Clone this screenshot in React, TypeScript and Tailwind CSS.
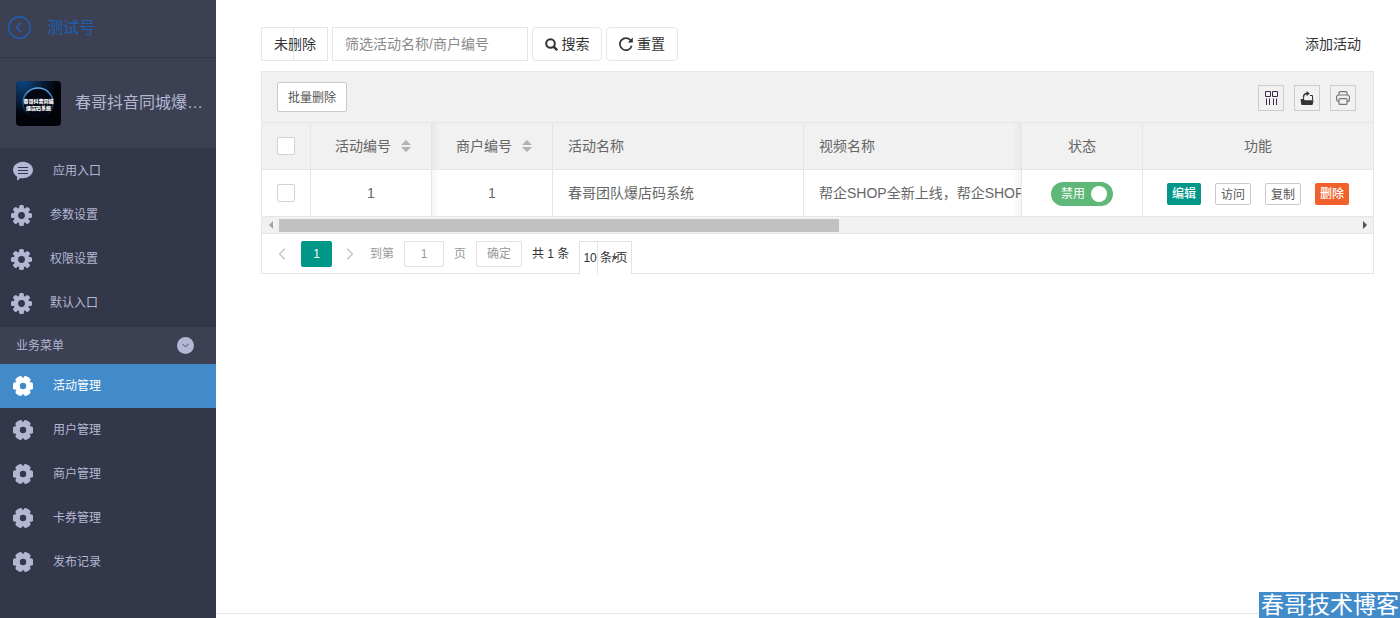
import clsx from "clsx";
import { ChevronDown, ChevronLeft, ChevronRight } from "lucide-react";
import { useState } from "react";

const systemMenu = [
  { label: "应用入口", icon: "chat" },
  { label: "参数设置", icon: "cog" },
  { label: "权限设置", icon: "cog" },
  { label: "默认入口", icon: "cog" },
];

const businessMenu = ["活动管理", "用户管理", "商户管理", "卡券管理", "发布记录"];

function ChatIcon() {
  return (
    <svg width="20" height="20" viewBox="0 0 20 20" fill="currentColor">
      <path d="M10 .8c5.5 0 10 3.6 10 8.2s-4.500 8.200-10 8.200c-.9 0-1.800-.1-2.600-.3L4 19.800l.2-4.100C1.600 14.200 0 11.800 0 9 0 4.400 4.500.8 10 .8z" />
      <path d="M5 6.500h10M5 9.500h10M5 12.500h10" stroke="#33374a" strokeWidth="1" />
    </svg>
  );
}

function CogIcon() {
  return (
    <svg width="21" height="21" viewBox="0 0 21 21">
      <g fill="currentColor">
        {[0, 45, 90, 135].map((angle) => (
          <rect key={angle} x="8.100" y="0" width="4.800" height="21" rx="1.500" transform={`rotate(${angle} 10.5 10.5)`} />
        ))}
        <circle cx="10.500" cy="10.500" r="7.800" />
      </g>
      <circle cx="10.500" cy="10.500" r="3.400" fill="#33374a" />
    </svg>
  );
}

function GearIcon({ active }: { active: boolean }) {
  return (
    <svg width="20" height="20" viewBox="0 0 20 20">
      <g fill="currentColor">
        {[30, 90, 150].map((angle) => (
          <rect key={angle} x="6.200" y="-0.200" width="7.600" height="20.400" rx="2.600" transform={`rotate(${angle} 10 10)`} />
        ))}
        <circle cx="10" cy="10" r="7.700" />
      </g>
      <circle cx="10" cy="10" r="3.200" fill={active ? "#428bca" : "#33374a"} />
    </svg>
  );
}

function Avatar() {
  return (
    <svg className="shrink-0 rounded" width="45" height="45" viewBox="0 0 45 45">
      <defs>
        <radialGradient id="glow" cx="0.15" cy="0" r="0.75">
          <stop offset="0" stopColor="#0d4680" />
          <stop offset="1" stopColor="#010309" />
        </radialGradient>
        <linearGradient id="ring" x1="0" y1="0" x2="0" y2="1">
          <stop offset="0" stopColor="#5fa8e8" />
          <stop offset="0.500" stopColor="#1b5590" />
          <stop offset="0.900" stopColor="#020811" />
        </linearGradient>
      </defs>
      <rect width="45" height="45" fill="url(#glow)" />
      <circle cx="22" cy="22" r="15" fill="#020712" stroke="url(#ring)" strokeWidth="1.500" />
      <g fill="#fff" fontSize="5" fontWeight="900" textAnchor="middle">
        <text x="22.500" y="22">春哥抖音同城</text>
        <text x="22.500" y="29">爆店码系统</text>
      </g>
    </svg>
  );
}

function Sidebar() {
  const [current, setCurrent] = useState("活动管理");
  const [open, setOpen] = useState(true);

  return (
    <aside className="w-[216px] shrink-0 bg-[#33374a] text-xs text-[#b3b7d3]">
      <a href="#" className="flex h-[58px] items-center gap-4 border-b border-[#343849] bg-[#3c4052] pb-0.5 pl-2 text-base text-[#1c60b4]">
        <svg width="23" height="23" viewBox="0 0 23 23" fill="none" stroke="currentColor" strokeWidth="1.500">
          <circle cx="11.500" cy="11.500" r="10.700" />
          <path d="M13 7l-4.500 4.500L13 16" />
        </svg>
        测试号
      </a>
      <div className="flex h-[90px] items-center gap-3.5 bg-[#3c4052] pl-4 text-base">
        <Avatar />
        <span className="w-[130px] shrink-0 truncate">春哥抖音同城爆店码系统</span>
      </div>
      <nav className="pt-px pb-0.5">
        {systemMenu.map((item) => (
          <a
            key={item.label}
            href="#"
            className={clsx("flex h-11 items-center", item.icon === "chat" ? "gap-5 pl-[13px]" : "gap-[18px] pl-[11px]")}
          >
            {item.icon === "chat" ? <ChatIcon /> : <CogIcon />}
            {item.label}
          </a>
        ))}
      </nav>
      <button
        type="button"
        onClick={() => setOpen(!open)}
        className="flex h-[37px] w-full items-center justify-between bg-[#3c4052] pr-[22px] pl-4"
      >
        业务菜单
        <span className="flex size-[17px] items-center justify-center rounded-full bg-[#b3b7d3] text-[#3c4052]">
          <ChevronDown size={11} strokeWidth={2} />
        </span>
      </button>
      {open && (
        <nav>
          {businessMenu.map((label) => (
            <a
              key={label}
              href="#"
              onClick={() => setCurrent(label)}
              className={clsx("flex h-11 items-center gap-5 pl-[13px]", { "bg-[#428bca] text-white": label === current })}
            >
              <GearIcon active={label === current} />
              {label}
            </a>
          ))}
        </nav>
      )}
    </aside>
  );
}

function FilterBar() {
  return (
    <form className="flex items-center gap-1 text-sm text-[#333]" onSubmit={(e) => e.preventDefault()}>
      <div className="relative">
        <select aria-label="删除状态" className="h-[34px] w-[67px] appearance-none border border-[#e6e6e6] bg-white pl-3">
          <option>未删除</option>
          <option>已删除</option>
        </select>
        <span className="pointer-events-none absolute inset-y-0 left-8 w-px bg-[#e6e6e6]" />
      </div>
      <input
        type="text"
        aria-label="筛选活动名称/商户编号"
        placeholder="筛选活动名称/商户编号"
        className="h-[34px] w-[196px] border border-[#e6e6e6] px-3 placeholder:text-[#8a8a8a]"
      />
      <button type="submit" className="flex h-[34px] w-[70px] items-center justify-center gap-1 rounded border border-[#e6e6e6]">
        <svg width="13" height="13" viewBox="0 0 13 13" fill="none" stroke="currentColor" strokeWidth="2">
          <circle cx="5.500" cy="5.500" r="4.300" />
          <path d="M8.600 8.600l3.600 3.600" strokeWidth="2.400" />
        </svg>
        搜索
      </button>
      <button type="reset" className="flex h-[34px] w-[72px] items-center justify-center gap-1 rounded border border-[#e6e6e6]">
        <svg width="14" height="14" viewBox="0 0 14 14" fill="none" stroke="currentColor" strokeWidth="1.700">
          <path d="M11.800 3.600A6 6 0 1 0 12.700 8.800" />
          <path d="M13.800.4v5H8.800z" fill="currentColor" stroke="none" />
        </svg>
        重置
      </button>
      <a href="#" className="mr-[13px] ml-auto">
        添加活动
      </a>
    </form>
  );
}

function Toolbar() {
  const tool = "flex size-[26px] items-center justify-center border border-[#ccc]";

  return (
    <div className="flex h-[51px] items-center justify-between border-b border-[#e6e6e6] bg-[#f1f1f1] pr-[17px] pl-[15px]">
      <button type="button" className="h-[30px] w-[70px] rounded-xs border border-[#c9c9c9] bg-white pt-0.5 text-xs text-[#555]">
        批量删除
      </button>
      <div className="flex gap-2.5 pt-0.5">
        <button type="button" aria-label="筛选列" className={clsx(tool, "text-[#3a2c48]")}>
          <svg width="14" height="14" viewBox="0 0 14 14" fill="none" stroke="currentColor">
            <path d="M1.500.5h5v5h-5zM8.500.5h5v5h-5zM2.500 7.500V14M5.500 7.500V14M9.500 7.500V14M12.500 7.500V14" />
          </svg>
        </button>
        <button type="button" aria-label="导出" className={clsx(tool, "text-[#333]")}>
          <svg width="14" height="14" viewBox="0 0 14 14" fill="currentColor">
            <path d="M.6 8h3.200l1 1.200h8.800l-.8 4a.8.8 0 0 1-.8.7H2a.8.8 0 0 1-.8-.7z" />
            <path d="M10 4.500h2.500V9M3.500 8V6.500" fill="none" stroke="currentColor" />
            <path d="M3.500 6.500C3.500 4 5 2.500 7 2.500" fill="none" stroke="currentColor" strokeWidth="1.400" />
            <path d="M6.500 0l3.300 2.600L6.500 5.200z" />
          </svg>
        </button>
        <button type="button" aria-label="打印" className={clsx(tool, "text-[#777]")}>
          <svg width="14" height="14" viewBox="0 0 14 14" fill="none" stroke="currentColor" strokeWidth="1.200">
            <path d="M3 4V1.600Q3 .6 4 .6h6q1 0 1 1V4" />
            <path d="M3 10.500h-.4a2 2 0 0 1-2-2V6a2 2 0 0 1 2-2h8.800a2 2 0 0 1 2 2v2.500a2 2 0 0 1-2 2H11" />
            <rect x="3" y="7.600" width="8" height="5.800" rx="1" />
          </svg>
        </button>
      </div>
    </div>
  );
}

function SortArrows() {
  return (
    <svg width="10" height="12" viewBox="0 0 10 12" fill="#b2b2b2">
      <path d="M0 5l5-5 5 5zM0 7h10l-5 5z" />
    </svg>
  );
}

function ActivityTable() {
  const [enabled, setEnabled] = useState(true);
  const cell = "h-[47px] border-r border-b border-[#e6e6e6] font-normal";
  const box = "block mx-auto size-[18px] appearance-none rounded-xs border border-[#d2d2d2] bg-white checked:bg-[#5fb878]";
  const plain = "h-[22px] w-9 rounded-xs border border-[#c9c9c9] bg-white pt-0.5 text-[#555]";

  return (
    <table className="w-full table-fixed border-separate border-spacing-0 text-sm text-[#666]">
      <colgroup>
        <col className="w-[49px]" />
        <col className="w-[121px]" />
        <col className="w-[121px]" />
        <col className="w-[251px]" />
        <col />
        <col className="w-[121px]" />
        <col className="w-[230px]" />
      </colgroup>
      <thead className="bg-[#f1f1f1]">
        <tr>
          <th className={clsx(cell, "p-0")}>
            <input type="checkbox" aria-label="全选" className={box} />
          </th>
          {["活动编号", "商户编号"].map((title, i) => (
            <th key={title} className={clsx(cell, "py-0 pr-0 pl-1", { "bg-linear-to-r from-[#e8e8e8] to-[#f1f1f1] to-6%": i === 1 })}>
              <span className="flex items-center justify-center gap-2.5">
                {title}
                <SortArrows />
              </span>
            </th>
          ))}
          <th className={clsx(cell, "py-0 pr-0 pl-[15px] text-left")}>活动名称</th>
          <th className={clsx(cell, "bg-linear-to-l from-[#e8e8e8] to-[#f1f1f1] to-4% py-0 pr-0 pl-[15px] text-left")}>视频名称</th>
          <th className={clsx(cell, "p-0")}>状态</th>
          <th className={clsx(cell, "border-r-0 p-0")}>功能</th>
        </tr>
      </thead>
      <tbody>
        <tr>
          <td className={clsx(cell, "p-0")}>
            <input type="checkbox" aria-label="选择活动 1" className={box} />
          </td>
          <td className={clsx(cell, "p-0 text-center")}>1</td>
          <td className={clsx(cell, "bg-linear-to-r from-[#f5f5f5] to-white to-6% p-0 text-center")}>1</td>
          <td className={clsx(cell, "py-0 pr-0 pl-[15px]")}>春哥团队爆店码系统</td>
          <td className={clsx(cell, "bg-linear-to-l from-[#f5f5f5] to-white to-4% py-0 pr-0 pl-[15px]")}>
            <div className="overflow-hidden whitespace-nowrap">帮企SHOP全新上线，帮企SHOP</div>
          </td>
          <td className={clsx(cell, "px-0 pt-0.5 pb-0")}>
            <button
              type="button"
              role="switch"
              aria-checked={enabled}
              onClick={() => setEnabled(!enabled)}
              className={clsx(
                "mx-auto flex h-6 w-[62px] items-center justify-between rounded-full pr-[6px] pl-2.5 text-xs text-white",
                enabled ? "bg-[#5fb878]" : "bg-[#d2d2d2]",
              )}
            >
              禁用
              <span className="size-4 rounded-full bg-white" />
            </button>
          </td>
          <td className={clsx(cell, "border-r-0 px-0 pt-0.5 pb-0")}>
            <div className="flex items-center justify-center gap-3.5 text-xs">
              <button type="button" className="h-[22px] w-[34px] rounded-xs bg-[#009688] font-medium text-white">
                编辑
              </button>
              <button type="button" className={plain}>
                访问
              </button>
              <button type="button" className={plain}>
                复制
              </button>
              <button type="button" className="h-[22px] w-[34px] rounded-xs bg-[#f2602b] font-medium text-white">
                删除
              </button>
            </div>
          </td>
        </tr>
      </tbody>
    </table>
  );
}

function Scrollbar() {
  return (
    <div className="flex h-[17px] items-center border-b border-[#e6e6e6] bg-[#f1f1f1]">
      <span className="flex w-[17px] shrink-0 justify-center">
        <svg width="4" height="8" viewBox="0 0 4 8" fill="#a3a3a3">
          <path d="M4 0v8L0 4z" />
        </svg>
      </span>
      <div className="flex-1">
        <div className="h-[13px] w-[52%] bg-[#c1c1c1]" />
      </div>
      <span className="flex w-[17px] shrink-0 justify-center">
        <svg width="4" height="8" viewBox="0 0 4 8" fill="#505050">
          <path d="M0 0v8l4-4z" />
        </svg>
      </span>
    </div>
  );
}

function Pager() {
  return (
    <div className="flex h-[39px] items-start gap-2.5 pt-[7px] text-xs leading-[26px] text-[#999]">
      <div className="flex">
        <button type="button" aria-label="上一页" className="flex h-[26px] w-[39px] items-center justify-center text-[#c2c2c2]">
          <ChevronLeft size={20} strokeWidth={1.5} />
        </button>
        <button type="button" className="h-[26px] w-[31px] rounded-xs bg-[#009688] text-white">
          1
        </button>
        <button type="button" aria-label="下一页" className="flex h-[26px] w-7 items-center justify-end text-[#c2c2c2]">
          <ChevronRight size={20} strokeWidth={1.5} />
        </button>
      </div>
      <label htmlFor="page">到第</label>
      <input id="page" type="text" defaultValue="1" className="h-[26px] w-10 rounded-xs border border-[#e2e2e2] text-center" />
      <span>页</span>
      <button type="button" className="h-[26px] w-[46px] rounded-xs border border-[#e2e2e2] leading-6">
        确定
      </button>
      <span className="text-[#333]">共 1 条</span>
      <div className="relative">
        <select
          aria-label="每页条数"
          className="h-[33px] w-[53px] appearance-none border border-b-0 border-[#e2e2e2] bg-white pl-[3px] text-[#333]"
        >
          <option>10 条/页</option>
          <option>20 条/页</option>
        </select>
        <span className="pointer-events-none absolute top-0 left-[18px] h-full w-px bg-[#e6e6e6]" />
        <svg className="pointer-events-none absolute top-[15px] left-[33px]" width="6" height="4" viewBox="0 0 6 4" fill="#555">
          <path d="M0 0h6L3 4z" />
        </svg>
      </div>
    </div>
  );
}

export default function App() {
  return (
    <div className="relative flex min-h-screen bg-white font-['Liberation_Sans','Noto_Sans_CJK_SC',sans-serif]" lang="zh-CN">
      <Sidebar />
      <div className="flex min-w-0 flex-1 flex-col">
        <main className="flex-1 pt-[27px] pr-[26px] pl-[45px]">
          <FilterBar />
          <section className="mt-2.5 border border-[#e6e6e6]">
            <Toolbar />
            <ActivityTable />
            <Scrollbar />
            <Pager />
          </section>
        </main>
        <footer className="h-[5px] border-t border-[#e6e6e6]" />
      </div>
      <div className="absolute right-0 bottom-0 bg-[#428bca] pr-px pl-0.5 text-[23px] leading-[26px] text-white">春哥技术博客</div>
    </div>
  );
}
